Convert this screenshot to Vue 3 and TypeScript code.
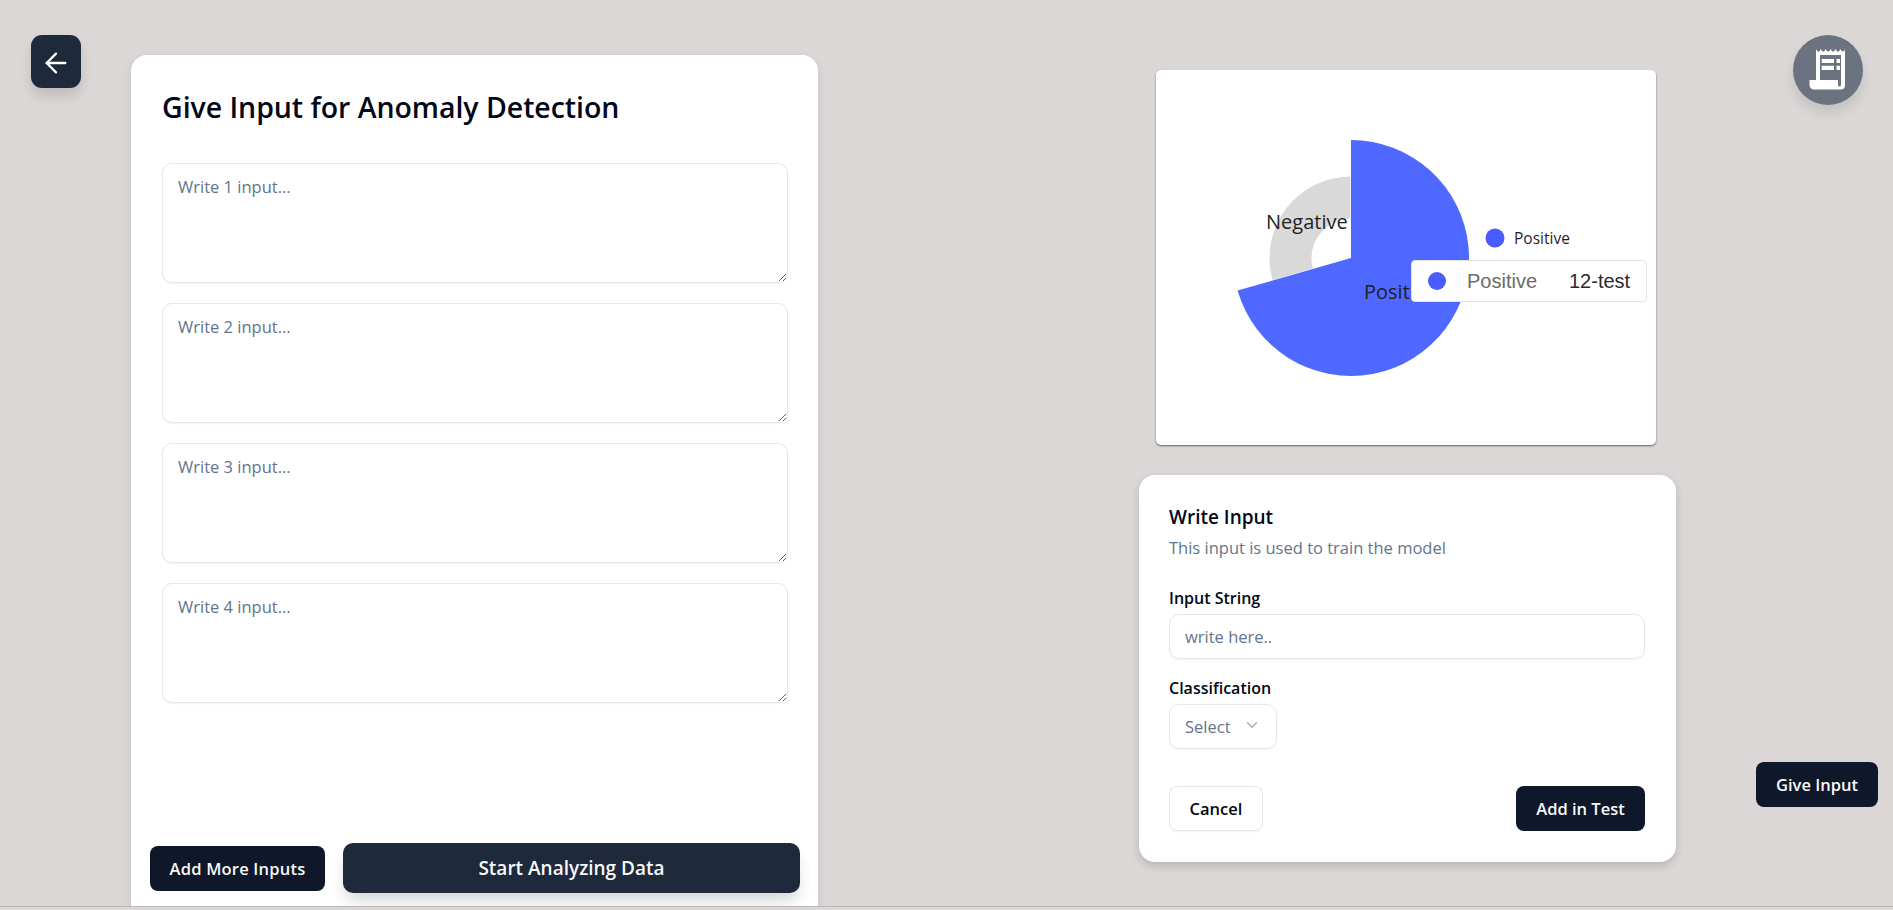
<template>
  <div class="page">
    <button class="back-btn" aria-label="Back">
      <svg width="32" height="32" viewBox="0 0 24 24" fill="none" stroke="#fff" stroke-width="1.7" stroke-linecap="round" stroke-linejoin="round">
        <path d="m12 19-7-7 7-7" />
        <path d="M19 12H5" />
      </svg>
    </button>

    <!-- Left form -->
    <section class="input-card">
      <h1 class="card-title">Give Input for Anomaly Detection</h1>
      <div class="input-list">
        <textarea v-for="n in inputs" :key="n" class="input-area" :placeholder="`Write ${n} input...`"></textarea>
      </div>
      <div class="input-actions">
        <button class="btn btn-dark btn-more">Add More Inputs</button>
        <button class="btn btn-start">Start Analyzing Data</button>
      </div>
    </section>

    <!-- Chart + train form -->
    <div class="middle">
      <div class="chart-card">
        <svg class="pie" width="500" height="375" viewBox="0 0 500 375">
          <path d="M116.200 210.600A82 82 0 0 1 195 106V149A39 39 0 0 0 157.500 198.700Z" fill="#d9d9d9" stroke="#fff" stroke-width="1" />
          <path d="M195 188V70A118 118 0 1 1 81.600 220.500Z" fill="#4f68ff" />
          <text x="110" y="159" class="pie-label">Negative</text>
          <text x="208" y="229" class="pie-label">Positive</text>
          <circle cx="339" cy="168" r="9.500" fill="#4a5cff" />
          <text x="358" y="174" class="legend-label">Positive</text>
        </svg>
        <div class="tooltip">
          <span class="tooltip-dot"></span>
          <span class="tooltip-name">Positive</span>
          <span class="tooltip-value">12-test</span>
        </div>
      </div>

      <div class="train-card">
        <h2 class="train-title">Write Input</h2>
        <p class="train-sub">This input is used to train the model</p>
        <label class="field-label">Input String</label>
        <input class="text-input" placeholder="write here.." />
        <label class="field-label second">Classification</label>
        <button class="select-btn">
          <span>Select</span>
          <svg width="18" height="18" viewBox="0 0 24 24" fill="none" stroke="#64748b" stroke-opacity="0.6" stroke-width="1.800" stroke-linecap="round" stroke-linejoin="round">
            <path d="m6 9 6 6 6-6" />
          </svg>
        </button>
        <div class="train-actions">
          <button class="btn btn-outline">Cancel</button>
          <button class="btn btn-dark btn-add">Add in Test</button>
        </div>
      </div>
    </div>

    <div class="side">
      <button class="avatar" aria-label="Receipts">
        <svg width="70" height="70" viewBox="0 0 70 70">
          <path d="M23 14q1.200 2.800 2.400 2.800T27.900 14q1.200 2.800 2.400 2.800T32.800 14q1.200 2.800 2.400 2.800T37.700 14q1.200 2.800 2.400 2.800T42.600 14q1.200 2.800 2.400 2.800T47.500 14q1.200 2.800 2.400 2.800T52 14V50.500a4 4 0 0 1-3.500 4H21a4.500 4.500 0 0 1-4.500-4.500V45H23Z" fill="#fff" />
          <path d="M27 20H48V50a1.500 1.500 0 0 1-3 0V45H27Z" fill="#6b7280" />
          <path d="M28.700 24H41V28H28.700ZM28.700 30.700H41V35H28.700ZM43.500 24H47V28H43.500ZM43.500 30.700H47V35H43.500Z" fill="#fff" />
        </svg>
      </button>
      <button class="btn btn-dark btn-give">Give Input</button>
    </div>
  </div>
</template>

<script setup lang="ts">
const inputs: number[] = [1, 2, 3, 4]
</script>

<style>
html, body { margin: 0; background: #dbd7d7; overflow: hidden; }
</style>

<style scoped>
* { box-sizing: border-box; margin: 0; padding: 0; }

.page {
  height: 907px;
  display: flex;
  overflow: hidden;
  background: #dbd7d7;
  border-bottom: 1px solid #b9b6b6;
  font-family: "Open Sans", "Noto Sans", sans-serif;
  color: #020817;
}

.btn {
  border: none;
  border-radius: 8px;
  font-family: inherit;
  font-size: 16.500px;
  font-weight: 600;
  cursor: pointer;
  height: 45px;
}
.btn-dark { background: #0f172a; color: #f8fafc; }

.back-btn {
  flex: none;
  width: 50px;
  height: 53px;
  margin: 35px 0 0 31px;
  padding-top: 3px;
  background: #1e293b;
  border: none;
  border-radius: 11px;
  display: flex;
  align-items: center;
  justify-content: center;
  box-shadow: 0 8px 12px rgba(0,0,0,0.12);
}

.input-card {
  flex: none;
  width: 687px;
  height: 900px;
  margin: 55px 0 0 50px;
  padding: 32px 31px;
  background: #fff;
  border-radius: 16px;
  box-shadow: 0 4px 10px rgba(0,0,0,0.1);
  position: relative;
}
.card-title {
  font-size: 28.500px;
  line-height: 40px;
  font-weight: 600;
  letter-spacing: -0.05px;
}
.input-list {
  margin-top: 36px;
  display: flex;
  flex-direction: column;
  gap: 20px;
}
.input-area {
  width: 626px;
  height: 120px;
  padding: 11px 15px;
  border: 1px solid #e2e8f0;
  border-radius: 10px;
  font-family: inherit;
  font-size: 16.500px;
  line-height: 24px;
  outline: none;
  resize: vertical;
  box-shadow: 0 1px 2px rgba(0,0,0,0.05);
}
.input-area::placeholder, .text-input::placeholder { color: #64748b; opacity: 1; }

.input-actions {
  margin: 140px 0 0 -12px;
  display: flex;
  align-items: center;
  gap: 18px;
  width: 650px;
}
.btn-more { width: 175px; font-size: 16.500px; letter-spacing: 0.2px; }
.btn-start {
  width: 457px;
  height: 50px;
  background: #1e293b;
  color: #f8fafc;
  font-size: 19px;
  border-radius: 10px;
  box-shadow: 0 10px 15px -3px rgba(30,41,59,0.2);
}

.middle {
  flex: none;
  width: 537px;
  margin-left: 321px;
  padding-top: 70px;
  display: flex;
  flex-direction: column;
  position: relative;
}
.chart-card {
  width: 500px;
  height: 375px;
  margin-left: 17px;
  background: #fff;
  border-radius: 5px;
  box-shadow: 0 1px 2px rgba(0,0,0,0.55);
  position: relative;
}
.pie { display: block; }
.pie-label { font-family: "Open Sans", sans-serif; font-size: 20px; fill: #1f1f1f; }
.legend-label { font-family: "Open Sans", sans-serif; font-size: 15.500px; fill: #1f1f1f; }

.tooltip {
  position: absolute;
  left: 255px;
  top: 190px;
  width: 236px;
  height: 42px;
  padding-left: 16px;
  display: flex;
  align-items: center;
  background: #fff;
  border: 1px solid #e3e3e3;
  border-radius: 4px;
  font-family: "Liberation Sans", Arial, sans-serif;
  font-size: 20px;
}
.tooltip-dot { width: 18px; height: 18px; border-radius: 50%; background: #4a5cff; margin-right: 21px; }
.tooltip-name { color: #6b6b6b; width: 102px; }
.tooltip-value { color: #2b2b2b; }

.train-card {
  width: 537px;
  height: 387px;
  margin-top: 30px;
  padding: 30px 30px 0;
  background: #fff;
  border-radius: 16px;
  box-shadow: 0 4px 8px rgba(0,0,0,0.16);
  position: relative;
}
.train-card::before {
  content: "";
  position: absolute;
  z-index: -1;
  left: 0;
  bottom: 0;
  width: 316px;
  height: 20px;
  box-shadow: 0 6px 8px rgba(0,0,0,0.18);
}
.train-title { font-size: 19px; line-height: 24px; font-weight: 600; }
.train-sub { margin-top: 7px; font-size: 16.500px; line-height: 24px; color: #64748b; }
.field-label { display: block; margin-top: 26px; font-size: 16px; line-height: 24px; font-weight: 600; }
.field-label.second { margin-top: 17px; }
.text-input {
  display: block;
  width: 476px;
  height: 45px;
  margin-top: 4px;
  padding: 0 15px;
  border: 1px solid #e2e8f0;
  border-radius: 10px;
  font-family: inherit;
  font-size: 16.500px;
  outline: none;
  box-shadow: 0 1px 2px rgba(0,0,0,0.05);
}
.select-btn {
  width: 108px;
  height: 45px;
  margin-top: 4px;
  padding: 0 15px;
  display: flex;
  align-items: center;
  justify-content: space-between;
  background: #fff;
  border: 1px solid #e2e8f0;
  border-radius: 10px;
  color: #64748b;
  font-family: inherit;
  font-size: 16.500px;
  box-shadow: 0 1px 2px rgba(0,0,0,0.05);
}
.select-btn svg { margin-top: -3px; }
.train-actions {
  width: 476px;
  margin-top: 37px;
  display: flex;
  justify-content: space-between;
}
.btn-outline { width: 94px; background: #fff; border: 1px solid #e2e8f0; color: #020817; box-shadow: 0 1px 2px rgba(0,0,0,0.05); }
.btn-add { width: 129px; }

.side {
  flex: 1;
  padding: 35px 15px 0 0;
  display: flex;
  flex-direction: column;
  align-items: flex-end;
}
.avatar {
  width: 70px;
  height: 70px;
  margin-right: 15px;
  padding: 0;
  border: none;
  border-radius: 50%;
  background: #6b7280;
  box-shadow: 0 8px 12px rgba(0,0,0,0.1);
}
.avatar svg { display: block; }
.btn-give { width: 122px; margin-top: 657px; }
</style>
